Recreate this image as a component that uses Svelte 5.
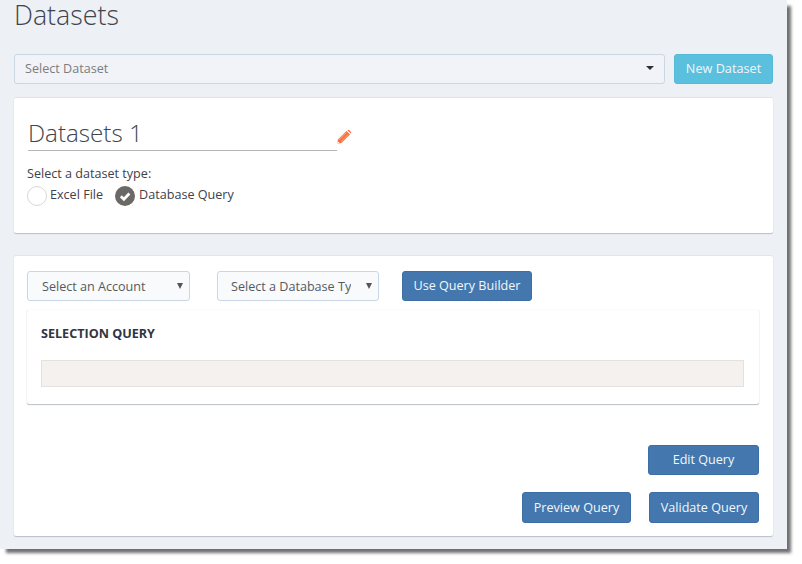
<script>
  const accent = 'Datasets 1';
</script>

<div class="page">
  <h1>Datasets</h1>
  <div class="toprow">
    <div class="dataset-select">
      <span>Select Dataset</span>
      <i class="caret"></i>
    </div>
    <button class="btn info">New Dataset</button>
  </div>

  <section class="card first">
    <div class="name-row">
      <div class="name">{accent}</div>
      <svg class="pencil" viewBox="0 0 16 16" width="16" height="16" aria-hidden="true">
        <path d="M1 15 L2 10.6 L10.6 2 L14 5.4 L5.4 14 Z" fill="#ff6a33"/>
        <path d="M11.4 1.3 Q12.4 .4 13.4 1.3 L14.8 2.7 Q15.6 3.6 14.8 4.6 Z" fill="#ff6a33"/>
        <path d="M3.2 11 L10.8 3.4 M4.9 12.7 L12.5 5.1" stroke="#ffb199" stroke-width=".8" fill="none"/>
        <path d="M1 15 L1.7 12.2 L3.8 14.3 Z" fill="#fff"/>
      </svg>
    </div>
    <div class="type-label">Select a dataset type:</div>
    <div class="radios">
      <span class="radio"></span>
      <span class="radio-text">Excel File</span>
      <span class="radio checked">
        <svg viewBox="0 0 20 20" width="20" height="20" aria-hidden="true">
          <path d="M5.8 10.2 L8.9 13.2 L14.4 7.5" stroke="#fff" stroke-width="2.8" fill="none"/>
        </svg>
      </span>
      <span class="radio-text">Database Query</span>
    </div>
  </section>

  <section class="card second">
    <div class="controls">
      <div class="mini-select account">
        <span class="label">Select an Account</span>
        <i class="caret small"></i>
      </div>
      <div class="mini-select dbtype">
        <span class="label">Select a Database Ty</span>
        <i class="caret small"></i>
      </div>
      <button class="btn primary builder">Use Query Builder</button>
    </div>

    <div class="query-card">
      <div class="query-title">SELECTION QUERY</div>
      <div class="query-field"></div>
    </div>

    <div class="actions">
      <button class="btn primary edit">Edit Query</button>
      <div class="action-row">
        <button class="btn primary preview">Preview Query</button>
        <button class="btn primary validate">Validate Query</button>
      </div>
    </div>
  </section>
</div>

<style>
  :global(body) {
    margin: 0;
    background: #fff;
  }
  .page {
    position: relative;
    width: 787px;
    height: 549px;
    box-sizing: border-box;
    padding: 0 14px;
    margin-bottom: 15px;
    background: #edf0f5;
    font-family: "Open Sans", sans-serif;
    font-size: 12.6px;
    color: #3f4149;
    box-shadow: 5px 5px 3px -1px #707072;
  }
  h1 {
    margin: 0;
    height: 54px;
    font-size: 26.8px;
    line-height: 30px;
    font-weight: 300;
    color: #40454d;
    box-sizing: border-box;
  }
  .toprow {
    display: flex;
    gap: 9px;
    height: 30px;
  }
  .dataset-select {
    flex: 1;
    display: flex;
    align-items: center;
    justify-content: space-between;
    padding: 0 10px 2px 10px;
    border: 1px solid #c9d6e3;
    border-radius: 3px;
    background: #f1f3f8;
    color: #7d7d7d;
  }
  .caret {
    width: 0;
    height: 0;
    border-left: 4px solid transparent;
    border-right: 4px solid transparent;
    border-top: 4px solid #2e2e33;
  }
  .caret.small {
    border-left-width: 3px;
    border-right-width: 3px;
    border-top: 6px solid #555;
    margin-top: 0;
  }
  .btn {
    height: 30px;
    padding: 0 0 1px;
    box-sizing: border-box;
    border-radius: 3px;
    font-family: inherit;
    font-size: 12.6px;
    color: #f2f7fb;
  }
  .btn.info {
    width: 99px;
    background: #5bc0de;
    border: 1px solid #55b9d8;
    font-size: 12.7px;
    padding-bottom: 3px;
  }
  .btn.primary {
    background: #4477ae;
    border: 1px solid #3d6fa5;
  }
  .card {
    background: #fff;
    border-radius: 2px;
    box-shadow: 0 1px 1px rgba(120, 130, 150, .45), 0 -1px 1px rgba(120, 130, 150, .1);
  }
  .first {
    height: 135px;
    margin-top: 14px;
    padding: 1px 13px 0;
    box-sizing: border-box;
  }
  .name-row {
    display: flex;
    align-items: flex-end;
    height: 52px;
  }
  .name {
    width: 309px;
    margin-left: 1px;
    height: 31px;
    font-size: 24.2px;
    line-height: 27px;
    font-weight: 300;
    color: #40454d;
    border-bottom: 1px solid #b5b5b5;
    box-sizing: content-box;
  }
  .pencil {
    margin: 0 0 6px -1px;
  }
  .type-label {
    margin-top: 14px;
    line-height: 17px;
  }
  .radios {
    display: flex;
    align-items: center;
    height: 20px;
    margin-top: 4px;
  }
  .radio {
    width: 20px;
    height: 20px;
    box-sizing: border-box;
    border-radius: 50%;
    border: 1px solid #d8d8d4;
    background: #fff;
    display: block;
  }
  .radio.checked {
    border: 0;
    background: #6b6965;
    margin-left: 12px;
  }
  .radio svg {
    display: block;
  }
  .radio-text {
    margin-left: 3px;
    margin-top: -3px;
  }
  .radio.checked + .radio-text {
    margin-left: 4px;
  }
  .second {
    height: 280px;
    margin-top: 23px;
    padding: 15px 14px 0 13px;
    box-sizing: border-box;
  }
  .controls {
    display: flex;
    height: 30px;
  }
  .mini-select {
    height: 30px;
    box-sizing: border-box;
    border: 1px solid #c9d6e3;
    border-radius: 3px;
    background: #f8fafc;
    display: flex;
    align-items: center;
    color: #555a60;
  }
  .label {
    overflow: hidden;
    white-space: nowrap;
    display: block;
  }
  .account {
    width: 163px;
    padding: 0 6px 0 14px;
    justify-content: space-between;
  }
  .dbtype {
    width: 162px;
    margin-left: 27px;
    padding: 0 6px 0 13px;
    justify-content: space-between;
  }
  .builder {
    width: 130px;
    margin-left: 23px;
  }
  .query-card {
    margin-top: 9px;
    height: 94px;
    box-sizing: border-box;
    padding: 15px 15px 0 14px;
    border-radius: 2px;
    box-shadow: 0 1px 1px rgba(120, 130, 150, .5), 0 0 1px rgba(120, 130, 150, .3);
  }
  .query-title {
    font-weight: 700;
    line-height: 17px;
    color: #2f3640;
  }
  .query-field {
    margin-top: 18px;
    height: 27px;
    background: #f4f1ee;
    border: 1px solid #e4e2df;
    box-sizing: border-box;
  }
  .actions {
    margin-top: 41px;
    display: flex;
    flex-direction: column;
    align-items: flex-end;
  }
  .edit {
    width: 111px;
  }
  .action-row {
    display: flex;
    gap: 18px;
    margin-top: 17px;
  }
  .preview {
    width: 109px;
    height: 31px;
  }
  .validate {
    width: 110px;
    height: 31px;
  }
</style>
